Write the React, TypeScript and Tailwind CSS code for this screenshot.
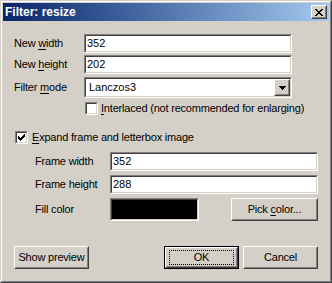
import React from "react";

const font = { fontFamily: '"Liberation Sans", Arial, sans-serif' };

const Sunken = ({ className, children }: { className: string; children?: React.ReactNode }) => (
  <div className={`flex border border-t-[#808080] border-l-[#808080] border-b-white border-r-white ${className}`}>
    <div className="flex flex-1 items-center border border-t-[#404040] border-l-[#404040] border-b-[#d4d0c8] border-r-[#d4d0c8] bg-white overflow-hidden">
      {children}
    </div>
  </div>
);

const Raised = ({ className, children }: { className: string; children?: React.ReactNode }) => (
  <div className={`flex border border-t-white border-l-white border-b-[#404040] border-r-[#404040] bg-[#d4d0c8] ${className}`}>
    <div className="relative flex flex-1 items-center justify-center border border-t-[#d4d0c8] border-l-[#d4d0c8] border-b-[#808080] border-r-[#808080]">
      {children}
    </div>
  </div>
);

const TextBox = ({ value, className }: { value: string; className: string }) => (
  <Sunken className={className}>
    <span className="pl-[1px] text-[11px] text-black leading-none">{value}</span>
  </Sunken>
);

const Check = () => (
  <svg width="7" height="7" viewBox="0 0 7 7" shapeRendering="crispEdges">
    <path
      fill="#000"
      d="M6 0h1v1h-1z M5 1h2v1h-2z M0 2h1v1h-1z M4 2h3v1h-3z M0 3h2v1h-2z M3 3h3v1h-3z M0 4h5v1h-5z M1 5h3v1h-3z M2 6h1v1h-1z"
    />
  </svg>
);

const CheckBox = ({ checked }: { checked?: boolean }) => (
  <Sunken className="w-[13px] h-[13px] shrink-0">
    <div className="flex flex-1 h-full items-center justify-center">{checked && <Check />}</div>
  </Sunken>
);

const Label = ({ pre, u, post, className }: { pre: string; u?: string; post?: string; className: string }) => (
  <div className={`text-[11px] text-black leading-none tracking-[-0.2px] ${className}`}>
    {pre}
    {u && <u className="underline-offset-2">{u}</u>}
    {post}
  </div>
);

export default function App() {
  return (
    <div style={font} className="w-[332px] h-[283px] border border-t-[#d4d0c8] border-l-[#d4d0c8] border-b-[#404040] border-r-[#404040] bg-[#d4d0c8]">
      <div className="flex flex-col h-full border border-t-white border-l-white border-b-[#808080] border-r-[#808080] p-[1px]">
        {/* title bar */}
        <div className="flex items-center h-[18px] bg-gradient-to-r from-[#0a246a] to-[#a6caf0] pl-[2px] pr-[2px]">
          <span className="flex-1 text-[12px] font-bold text-white leading-none">Filter: resize</span>
          <Raised className="w-[16px] h-[14px]">
            <svg width="8" height="7" viewBox="0 0 8 7" shapeRendering="crispEdges">
              <path
                fill="#000"
                d="M0 0h2v1h-2z M6 0h2v1h-2z M1 1h2v1h-2z M5 1h2v1h-2z M2 2h4v1h-4z M3 3h2v1h-2z M2 4h4v1h-4z M1 5h2v1h-2z M5 5h2v1h-2z M0 6h2v1h-2z M6 6h2v1h-2z"
              />
            </svg>
          </Raised>
        </div>

        <div className="flex flex-col pl-[11px]">
          <div className="flex items-center mt-[13px]">
            <Label className="w-[70px]" pre="New " u="w" post="idth" />
            <TextBox className="w-[208px] h-[19px]" value="352" />
          </div>
          <div className="flex items-center mt-[2px]">
            <Label className="w-[70px]" pre="New " u="h" post="eight" />
            <TextBox className="w-[208px] h-[19px]" value="202" />
          </div>
          <div className="flex items-center mt-[3px]">
            <Label className="w-[70px]" pre="Filter " u="m" post="ode" />
            <Sunken className="w-[208px] h-[21px]">
              <span className="flex-1 pl-[3px] text-[11px] text-black leading-none">Lanczos3</span>
              <Raised className="w-[16px] h-full">
                <svg width="7" height="4" viewBox="0 0 7 4" shapeRendering="crispEdges">
                  <path fill="#000" d="M0 0h7v1h-7z M1 1h5v1h-5z M2 2h3v1h-3z M3 3h1v1h-1z" />
                </svg>
              </Raised>
            </Sunken>
          </div>
          <div className="flex items-center mt-[4px] ml-[71px] gap-[3px]">
            <CheckBox />
            <Label className="" pre="" u="I" post="nterlaced (not recommended for enlarging)" />
          </div>

          <div className="flex items-center mt-[16px] ml-[1px] gap-[4px]">
            <CheckBox checked />
            <Label className="" pre="" u="E" post="xpand frame and letterbox image" />
          </div>

          <div className="flex flex-col ml-[21px]">
            <div className="flex items-center mt-[8px]">
              <Label className="w-[75px]" pre="Frame width" />
              <TextBox className="w-[208px] h-[19px]" value="352" />
            </div>
            <div className="flex items-center mt-[4px]">
              <Label className="w-[75px]" pre="Frame height" />
              <TextBox className="w-[208px] h-[19px]" value="288" />
            </div>
            <div className="flex items-center mt-[4px]">
              <Label className="w-[75px]" pre="Fill color" />
              <Sunken className="w-[89px] h-[23px]">
                <div className="flex-1 h-full bg-black" />
              </Sunken>
              <Raised className="ml-[32px] w-[87px] h-[23px]">
                <Label className="" pre="Pick " u="c" post="olor..." />
              </Raised>
            </div>
          </div>

          <div className="flex items-center mt-[25px]">
            <Raised className="w-[75px] h-[23px]">
              <Label className="" pre="Show preview" />
            </Raised>
            <div className="ml-[75px] w-[75px] h-[23px] flex border border-black">
              <Raised className="flex-1">
                <div className="absolute left-[2px] top-[1px] right-[2px] bottom-[1px] border border-dotted border-black" />
                <Label className="" pre="OK" />
              </Raised>
            </div>
            <Raised className="ml-[4px] w-[75px] h-[23px]">
              <Label className="" pre="Cancel" />
            </Raised>
          </div>
        </div>
      </div>
    </div>
  );
}
